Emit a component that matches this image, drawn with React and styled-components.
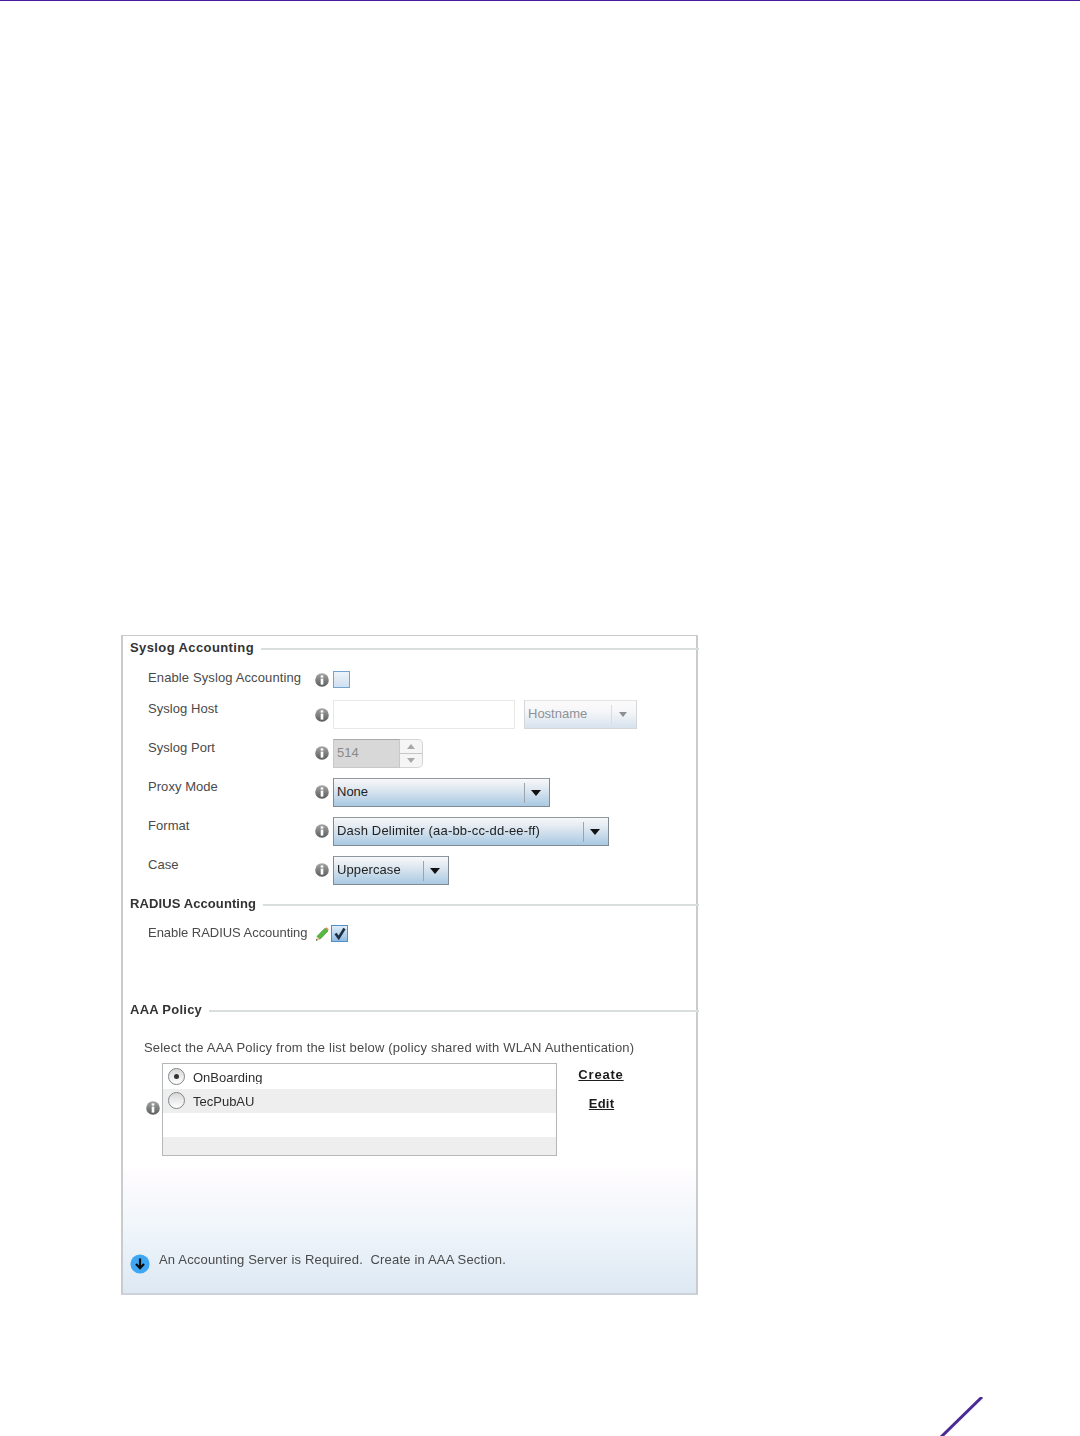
import React from 'react'
import styled, { createGlobalStyle } from 'styled-components'

const Global = createGlobalStyle`
  html, body { margin: 0; padding: 0; background: #fff; }
  body { font-family: "Liberation Sans", Arial, sans-serif; }
`

const Page = styled.div`
  width: 1080px;
  height: 1436px;
  overflow: hidden;
  border-top: 1px solid #4a1a9c;
  box-sizing: border-box;
  padding-top: 634px;
  padding-left: 121px;
`

const Panel = styled.div`
  width: 577px;
  height: 660px;
  box-sizing: border-box;
  border: 1px solid #c9cccd;
  border-right-width: 2px;
  border-bottom: 2px solid #cdd3da;
  border-left-width: 2px;
  background: linear-gradient(to bottom, #fff 0, #fff 530px, #fdfbfd 540px, #f0f6fb 590px, #dde8f3 100%);
  display: flex;
  flex-direction: column;
  filter: blur(0.5px);
`

const TitleRow = styled.div`
  height: 24px;
  margin-top: ${p => p.$top || 0}px;
  margin-right: -3px;
  padding-left: 7px;
  display: flex;
  align-items: center;
  gap: 7px;
`

const Title = styled.div`
  font-size: 13px;
  font-weight: bold;
  letter-spacing: ${p => p.$sp ?? 0.4}px;
  color: #333;
  position: relative;
  top: -1px;
`

const TitleLine = styled.div`
  flex: 1;
  height: 2px;
  margin-top: 1px;
  background: #d8dedc;
`

const Fields = styled.div`
  margin-top: ${p => p.$top}px;
  display: flex;
  flex-direction: column;
  gap: 10px;
`

const Field = styled.div`
  display: grid;
  grid-template-columns: 167px 18px 1fr;
  height: ${p => p.$h || 29}px;
  margin-top: ${p => p.$top || 0}px;
  margin-bottom: ${p => p.$bottom || 0}px;
  padding-left: 25px;
  align-items: center;
`

const Label = styled.div`
  font-size: 13px;
  line-height: 16px;
  letter-spacing: ${p => p.$sp || 0}px;
  color: #4a4a4a;
  align-self: start;
  margin-top: ${p => p.$top}px;
  white-space: nowrap;
`

const Controls = styled.div`
  display: flex;
  align-items: center;
  gap: 9px;
`

const IconWrap = styled.div`
  display: flex;
  align-items: center;
  margin-top: ${p => p.$top || 0}px;
`

const PolicyInfo = styled.div`
  display: flex;
  align-self: flex-start;
  margin-top: 38px;
`

const Check = styled.div`
  width: 17px;
  height: 17px;
  box-sizing: border-box;
  border: 1px solid ${p => (p.$on ? '#4f8fc8' : '#74a3cf')};
  background: ${p => (p.$on
    ? 'linear-gradient(to bottom, #e2edf7, #8fbce4)'
    : 'linear-gradient(to bottom, #eef3f9, #cfe0f0)')};
  margin-left: ${p => p.$left || 0}px;
  display: flex;
  align-items: center;
  justify-content: center;
`

const TextInput = styled.div`
  width: 182px;
  height: 29px;
  box-sizing: border-box;
  border: 1px solid #e8e8e6;
  background: #fff;
`

const Select = styled.div`
  width: ${p => p.$w}px;
  height: 29px;
  box-sizing: border-box;
  border: 1px solid ${p => (p.$off ? '#d3d7da' : '#7f8a94')};
  border-top-color: ${p => (p.$off ? '#e2e4e4' : '#8f989e')};
  background: ${p => (p.$off
    ? 'linear-gradient(to bottom, #fbfbfb, #f5f6f8 40%, #d6e2ee)'
    : 'linear-gradient(to bottom, #f7f8f9, #e4ebf2 30%, #a9c9e2)')};
  display: flex;
  align-items: center;
  font-size: 13px;
  color: ${p => (p.$off ? '#8d9196' : '#222')};
  padding-left: 3px;
`

const SelectText = styled.span`
  flex: 1;
  white-space: nowrap;
  letter-spacing: ${p => p.$sp || 0}px;
  position: relative;
  top: -1px;
`

const SelectArrow = styled.div`
  width: 25px;
  height: 20px;
  box-sizing: border-box;
  padding-right: 2px;
  border-left: 1px solid ${p => (p.$off ? '#dcdcdc' : '#99a4ad')};
  display: flex;
  align-items: center;
  justify-content: center;
  &::after {
    content: '';
    border-left: ${p => (p.$off ? 4 : 5)}px solid transparent;
    border-right: ${p => (p.$off ? 4 : 5)}px solid transparent;
    border-top: ${p => (p.$off ? 5 : 6)}px solid ${p => (p.$off ? '#8b8f92' : '#111')};
  }
`

const Spinner = styled.div`
  display: flex;
  height: 29px;
`

const SpinValue = styled.div`
  width: 67px;
  box-sizing: border-box;
  border: 1px solid #c8c8c8;
  border-top-color: #aaa;
  background: #d8d8d8;
  color: #8a8a8a;
  font-size: 13px;
  padding-left: 3px;
  line-height: 26px;
`

const SpinButtons = styled.div`
  width: 23px;
  box-sizing: border-box;
  border: 1px solid #d4d4d4;
  border-left: none;
  border-radius: 0 5px 5px 0;
  display: flex;
  flex-direction: column;
  background: #f6f5f6;
`

const SpinButton = styled.div`
  flex: 1;
  display: flex;
  align-items: center;
  justify-content: center;
  & + & { border-top: 1px solid #c6c6c6; }
  &::after {
    content: '';
    border-left: 4px solid transparent;
    border-right: 4px solid transparent;
    ${p => (p.$up ? 'border-bottom: 5px solid #a6a9ab;' : 'border-top: 5px solid #a6a9ab;')}
  }
`

const Intro = styled.div`
  margin-top: 18px;
  padding-left: 21px;
  height: 16px;
  font-size: 13px;
  line-height: 16px;
  letter-spacing: 0.19px;
  color: #4a4a4a;
  white-space: nowrap;
`

const PolicyRow = styled.div`
  margin-top: 7px;
  display: flex;
  padding-left: 23px;
`

const PolicyList = styled.div`
  width: 395px;
  height: 93px;
  box-sizing: border-box;
  border: 1px solid #b4b8b8;
  margin-left: 2px;
  display: flex;
  flex-direction: column;
`

const PolicyItem = styled.div`
  height: ${p => p.$h}px;
  background: ${p => (p.$grey ? '#eeeeee' : '#fff')};
  display: flex;
  align-items: flex-start;
  padding-left: 5px;
  gap: 8px;
`

const Radio = styled.div`
  width: 17px;
  height: 17px;
  box-sizing: border-box;
  margin-top: ${p => p.$top}px;
  border-radius: 50%;
  border: 1px solid #80858a;
  background: linear-gradient(to bottom, #d8d8d8, #fff);
  display: flex;
  align-items: center;
  justify-content: center;
  &::after {
    content: '';
    display: ${p => (p.$on ? 'block' : 'none')};
    width: 5px;
    height: 5px;
    border-radius: 50%;
    background: #333;
  }
`

const PolicyName = styled.div`
  font-size: 13px;
  line-height: 16px;
  height: ${p => p.$clip}px;
  overflow: hidden;
  margin-top: ${p => p.$top}px;
  color: #2e2e2e;
`

const Links = styled.div`
  width: 88px;
  padding-top: 4px;
  display: flex;
  flex-direction: column;
  align-items: center;
  gap: 14px;
`

const ActionLink = styled.a`
  font-size: 13px;
  font-weight: bold;
  line-height: 15px;
  letter-spacing: ${p => p.$sp}px;
  color: #1c1c1c;
  text-decoration: underline;
  margin-left: ${p => p.$left || 0}px;
`

const Footer = styled.div`
  margin-top: auto;
  margin-bottom: 19px;
  padding-left: 7px;
  display: flex;
  gap: 9px;
  align-items: flex-start;
`

const FooterText = styled.div`
  font-size: 13px;
  line-height: 16px;
  letter-spacing: 0.18px;
  color: #4a4a4a;
  position: relative;
  top: -2px;
  white-space: pre;
`

const Corner = styled.div`
  margin-top: 102px;
  margin-left: 817px;
  height: 40px;
`

const InfoIcon = () => (
  <svg width="14" height="14" viewBox="0 0 14 14">
    <defs>
      <linearGradient id="infoFill" x1="0" y1="0" x2="0" y2="1">
        <stop offset="0" stopColor="#a4a6a6" />
        <stop offset="1" stopColor="#5a5c5c" />
      </linearGradient>
    </defs>
    <circle cx="7" cy="7" r="6.8" fill="url(#infoFill)" />
    <rect x="5.7" y="2.4" width="2.6" height="2.2" fill="#fff" />
    <rect x="5.7" y="5.6" width="2.6" height="6" fill="#fff" />
  </svg>
)

const PencilIcon = () => (
  <svg width="14" height="15" viewBox="0 0 14 15">
    <path d="M10 1.2l3 2.8-8 8.3-3.1-2.9z" fill="#55bb40" stroke="#3a7f2c" strokeWidth="0.6" />
    <path d="M10.5 1.2l1-1 2.3 2.3-1 1z" fill="#e0854a" />
    <path d="M1.9 9.5l3.1 2.9-3.9 1.3z" fill="#e8c9a0" />
    <path d="M1 13.7l.5-1.8 1.3 1.2z" fill="#333" />
  </svg>
)

const Tick = () => (
  <svg width="14" height="14" viewBox="0 0 14 14">
    <path d="M2.5 6.5l3.2 4.5 5.8-9.5" fill="none" stroke="#1f3044" strokeWidth="2.6" />
  </svg>
)

const DownIcon = () => (
  <svg width="20" height="20" viewBox="0 0 20 20">
    <circle cx="10" cy="10" r="9.6" fill="#3ea6f2" />
    <path d="M10 4.5v9M6 10l4 4.2 4-4.2" fill="none" stroke="#0b0b0b" strokeWidth="2.2" />
  </svg>
)

const Dropdown = ({ w, off, sp, children }) => (
  <Select $w={w} $off={off}>
    <SelectText $sp={sp}>{children}</SelectText>
    <SelectArrow $off={off} />
  </Select>
)

const Row = ({ label, iconTop = -1, children }) => (
  <Field>
    <Label $top={1} $sp={0.05}>{label}</Label>
    <IconWrap $top={iconTop}><InfoIcon /></IconWrap>
    <Controls>{children}</Controls>
  </Field>
)

function App() {
  return (
    <Page>
      <Global />
      <Panel>
        <TitleRow>
          <Title>Syslog Accounting</Title>
          <TitleLine />
        </TitleRow>
        <Fields $top={11}>
          <Field $h={17} $bottom={2}>
            <Label $top={-1} $sp={0.12}>Enable Syslog Accounting</Label>
            <IconWrap $top={0}><InfoIcon /></IconWrap>
            <Controls><Check /></Controls>
          </Field>
          <Row label="Syslog Host" iconTop={1}>
            <TextInput />
            <Dropdown w={113} off>Hostname</Dropdown>
          </Row>
          <Row label="Syslog Port">
            <Spinner>
              <SpinValue>514</SpinValue>
              <SpinButtons>
                <SpinButton $up />
                <SpinButton />
              </SpinButtons>
            </Spinner>
          </Row>
          <Row label="Proxy Mode">
            <Dropdown w={217}>None</Dropdown>
          </Row>
          <Row label="Format">
            <Dropdown w={276} sp={0.18}>Dash Delimiter (aa-bb-cc-dd-ee-ff)</Dropdown>
          </Row>
          <Row label="Case">
            <Dropdown w={116} sp={0.1}>Uppercase</Dropdown>
          </Row>
        </Fields>

        <TitleRow $top={7}>
          <Title $sp={0.1}>RADIUS Accounting</Title>
          <TitleLine />
        </TitleRow>
        <Field $h={17} $top={9}>
          <Label $top={0} $sp={-0.04}>Enable RADIUS Accounting</Label>
          <IconWrap $top={1}><PencilIcon /></IconWrap>
          <Controls><Check $left={-2} $on><Tick /></Check></Controls>
        </Field>

        <TitleRow $top={56}>
          <Title $sp={0.25}>AAA Policy</Title>
          <TitleLine />
        </TitleRow>
        <Intro>Select the AAA Policy from the list below (policy shared with WLAN Authentication)</Intro>
        <PolicyRow>
          <PolicyInfo><InfoIcon /></PolicyInfo>
          <PolicyList>
            <PolicyItem $h={25}>
              <Radio $on $top={4} />
              <PolicyName $top={6} $clip={14}>OnBoarding</PolicyName>
            </PolicyItem>
            <PolicyItem $h={24} $grey>
              <Radio $top={3} />
              <PolicyName $top={5} $clip={16}>TecPubAU</PolicyName>
            </PolicyItem>
            <PolicyItem $h={24} />
            <PolicyItem $h={18} $grey />
          </PolicyList>
          <Links>
            <ActionLink $sp={0.8}>Create</ActionLink>
            <ActionLink $sp={0.2} $left={1}>Edit</ActionLink>
          </Links>
        </PolicyRow>

        <Footer>
          <DownIcon />
          <FooterText>An Accounting Server is Required.  Create in AAA Section.</FooterText>
        </Footer>
      </Panel>
      <Corner>
        <svg width="46" height="40" viewBox="0 0 46 40">
          <path d="M44 0L2 41" stroke="#4b2a96" strokeWidth="3" fill="none" />
        </svg>
      </Corner>
    </Page>
  )
}

export default App
